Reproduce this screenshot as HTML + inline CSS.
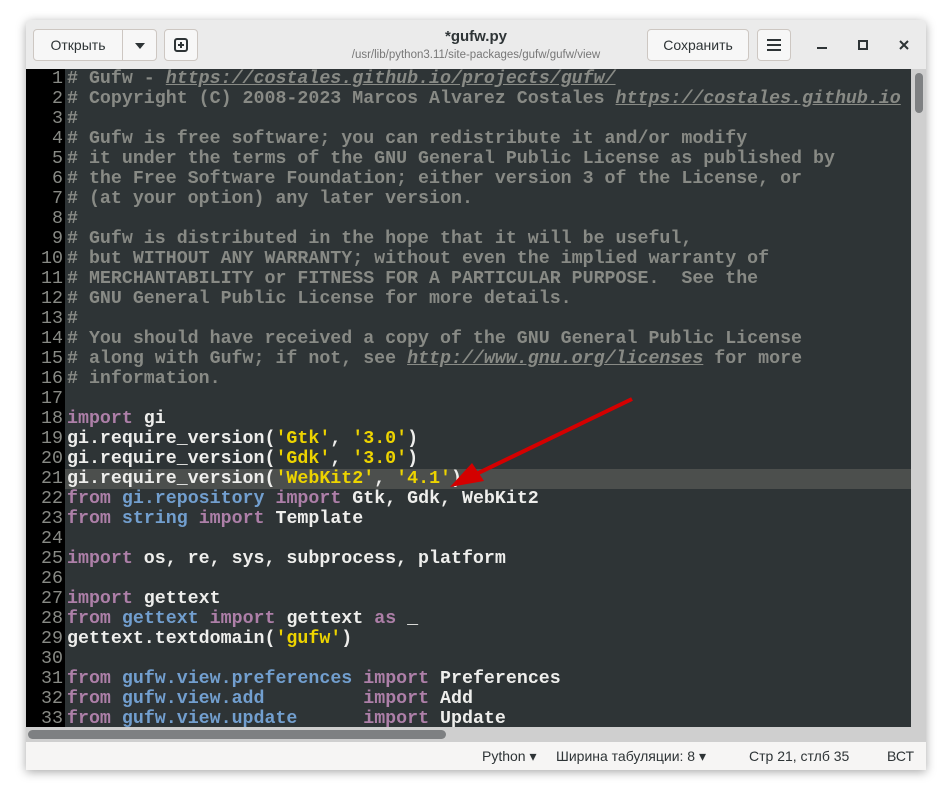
<!DOCTYPE html>
<html><head><meta charset="utf-8"><style>
body{margin:0;width:952px;height:799px;background:#fff;position:relative;overflow:hidden;font-family:"Liberation Sans","DejaVu Sans",sans-serif}
.win{position:absolute;left:26px;top:20px;width:900px;height:750px;background:#f6f5f4;box-shadow:0 2px 10px rgba(0,0,0,.35);border-radius:6px 6px 0 0;overflow:hidden}
.hdr{position:absolute;left:0;top:0;width:900px;height:49px;background:#ebebeb;border-bottom:1px solid #d0d0d0}
.btn{position:absolute;top:9px;height:32px;background:#f7f7f7;border:1px solid #cdc7c2;border-radius:4px;box-sizing:border-box;font-size:14px;color:#2e3436;line-height:30px;text-align:center}
.title{position:absolute;left:300px;width:300px;top:8px;text-align:center;font-weight:bold;font-size:15px;color:#2e3436}
.sub{position:absolute;left:250px;width:400px;top:29px;text-align:center;font-size:11.5px;color:#777}
.code{position:absolute;left:0;top:49px;width:885px;height:658px;background:#2e3436;overflow:hidden}
.gut{position:absolute;left:0;top:0;width:39px;height:100%;background:#000}
pre{margin:0;position:absolute;left:0;top:0;font-family:"Liberation Mono",monospace;font-size:18.3px;line-height:20px;color:#eeeeec;font-weight:bold}
.ln{display:inline-block;width:37px;text-align:right;color:#888a85;font-weight:normal;margin-right:4px}
.c{color:#888a85}.u{text-decoration:underline;font-style:italic}
.k{color:#ad7fa8}.b{color:#729fcf}.s{color:#edd400}
.cur{position:absolute;left:39px;top:400px;width:846px;height:20px;background:#4c4f4d}
.vs{position:absolute;left:885px;top:49px;width:15px;height:658px;background:#cfcfcf}
.hs{position:absolute;left:0;top:707px;width:900px;height:15px;background:#cfcfcf}
.st{position:absolute;left:0;top:722px;width:900px;height:28px;font-size:14px;color:#2e3436;line-height:28px}
</style></head><body>
<div class="win">
<div class="hdr">
<div class="btn" style="left:7px;width:90px;border-radius:4px 0 0 4px">Открыть</div>
<div class="btn" style="left:96px;width:35px;border-radius:0 4px 4px 0"><svg width="12" height="8" style="margin-top:11px"><path d="M1 1h10L6 7z" fill="#2e3436"/></svg></div>
<div class="btn" style="left:138px;width:34px"><svg width="14" height="14" style="margin-top:8px"><rect x="1" y="1" width="12" height="12" rx="2" fill="none" stroke="#2e3436" stroke-width="2"/><path d="M7 4v6M4 7h6" stroke="#2e3436" stroke-width="2"/></svg></div>
<div class="title">*gufw.py</div>
<div class="sub">/usr/lib/python3.11/site-packages/gufw/gufw/view</div>
<div class="btn" style="left:621px;width:102px">Сохранить</div>
<div class="btn" style="left:731px;width:34px"><svg width="16" height="14" style="margin-top:8px"><path d="M1 2h14M1 7h14M1 12h14" stroke="#2e3436" stroke-width="2"/></svg></div>
<div style="position:absolute;left:791px;top:27px;width:10px;height:2px;background:#2e3436"></div>
<div style="position:absolute;left:832px;top:20px;width:6px;height:6px;border:2px solid #2e3436"></div>
<svg style="position:absolute;left:873px;top:20px" width="10" height="10"><path d="M1 1l8 8M9 1l-8 8" stroke="#2e3436" stroke-width="2"/></svg>
</div>
<div class="code"><div class="gut"></div><div class="cur"></div>
<pre><span class="ln">1</span><span class="c"># Gufw - <span class="u">https://costales.github.io/projects/gufw/</span></span>
<span class="ln">2</span><span class="c"># Copyright (C) 2008-2023 Marcos Alvarez Costales <span class="u">https://costales.github.io</span></span>
<span class="ln">3</span><span class="c">#</span>
<span class="ln">4</span><span class="c"># Gufw is free software; you can redistribute it and/or modify</span>
<span class="ln">5</span><span class="c"># it under the terms of the GNU General Public License as published by</span>
<span class="ln">6</span><span class="c"># the Free Software Foundation; either version 3 of the License, or</span>
<span class="ln">7</span><span class="c"># (at your option) any later version.</span>
<span class="ln">8</span><span class="c">#</span>
<span class="ln">9</span><span class="c"># Gufw is distributed in the hope that it will be useful,</span>
<span class="ln">10</span><span class="c"># but WITHOUT ANY WARRANTY; without even the implied warranty of</span>
<span class="ln">11</span><span class="c"># MERCHANTABILITY or FITNESS FOR A PARTICULAR PURPOSE.  See the</span>
<span class="ln">12</span><span class="c"># GNU General Public License for more details.</span>
<span class="ln">13</span><span class="c">#</span>
<span class="ln">14</span><span class="c"># You should have received a copy of the GNU General Public License</span>
<span class="ln">15</span><span class="c"># along with Gufw; if not, see <span class="u">http://www.gnu.org/licenses</span> for more</span>
<span class="ln">16</span><span class="c"># information.</span>
<span class="ln">17</span>
<span class="ln">18</span><span class="k">import</span> gi
<span class="ln">19</span>gi.require_version(<span class="s">'Gtk'</span>, <span class="s">'3.0'</span>)
<span class="ln">20</span>gi.require_version(<span class="s">'Gdk'</span>, <span class="s">'3.0'</span>)
<span class="ln">21</span>gi.require_version(<span class="s">'WebKit2'</span>, <span class="s">'4.1'</span>)
<span class="ln">22</span><span class="k">from</span> <span class="b">gi.repository</span> <span class="k">import</span> Gtk, Gdk, WebKit2
<span class="ln">23</span><span class="k">from</span> <span class="b">string</span> <span class="k">import</span> Template
<span class="ln">24</span>
<span class="ln">25</span><span class="k">import</span> os, re, sys, subprocess, platform
<span class="ln">26</span>
<span class="ln">27</span><span class="k">import</span> gettext
<span class="ln">28</span><span class="k">from</span> <span class="b">gettext</span> <span class="k">import</span> gettext <span class="k">as</span> _
<span class="ln">29</span>gettext.textdomain(<span class="s">'gufw'</span>)
<span class="ln">30</span>
<span class="ln">31</span><span class="k">from</span> <span class="b">gufw.view.preferences</span> <span class="k">import</span> Preferences
<span class="ln">32</span><span class="k">from</span> <span class="b">gufw.view.add</span>         <span class="k">import</span> Add
<span class="ln">33</span><span class="k">from</span> <span class="b">gufw.view.update</span>      <span class="k">import</span> Update
</pre>
<svg style="position:absolute;left:0;top:0" width="885" height="658"><path d="M606 330L440 410" stroke="#d40000" stroke-width="4"/><path d="M424 418l22-24 12 18z" fill="#d40000"/></svg>
</div>
<div class="vs"><div style="position:absolute;left:4px;top:4px;width:8px;height:40px;border-radius:4px;background:#7e8082"></div></div>
<div class="hs"><div style="position:absolute;left:2px;top:3px;width:418px;height:9px;border-radius:5px;background:#7e8082"></div></div>
<div class="st"><span style="position:absolute;left:456px">Python ▾</span><span style="position:absolute;left:530px">Ширина табуляции: 8 ▾</span><span style="position:absolute;left:723px">Стр 21, стлб 35</span><span style="position:absolute;left:861px">ВСТ</span></div>
</div>
</body></html>
